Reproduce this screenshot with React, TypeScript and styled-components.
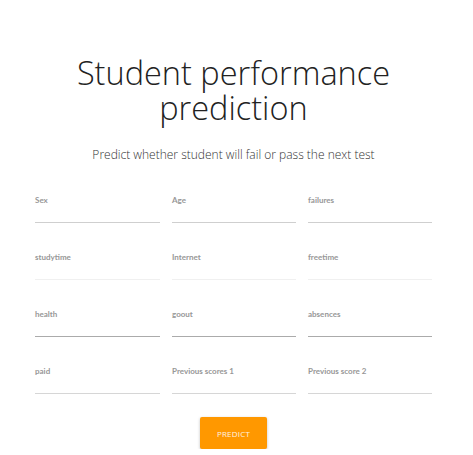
import React from "react";
import styled, { createGlobalStyle } from "styled-components";

const Global = createGlobalStyle`
  html, body { margin: 0; padding: 0; background: #fff; }
  body { font-family: "Open Sans", "Noto Sans", sans-serif; }
`;

const Page = styled.div`
  box-sizing: border-box;
  width: 473px;
  padding: 55px 6px 0 0;
  display: flex;
  flex-direction: column;
  align-items: center;
`;

const Title = styled.h1`
  margin: 0;
  font-family: "Open Sans", sans-serif;
  font-weight: 300;
  font-size: 32.5px;
  line-height: 35px;
  color: #222;
  text-align: center;
  width: 340px;
`;

const Subtitle = styled.p`
  margin: 22px 0 0;
  font-family: "Open Sans", sans-serif;
  font-weight: 300;
  font-size: 12px;
  line-height: 16px;
  color: #333;
  text-align: center;
`;

const Form = styled.div`
  margin-top: 32px;
  width: 397px;
  display: grid;
  grid-template-columns: 125px 124px 124px;
  column-gap: 12px;
  row-gap: 29px;
`;

const Field = styled.div<{ $line: string }>`
  height: 28px;
  box-sizing: border-box;
  border-bottom: 1px solid ${(p) => p.$line};
  display: flex;
  align-items: flex-start;
`;

const Label = styled.span`
  font-family: "Lato", sans-serif;
  font-weight: 700;
  font-size: 8px;
  line-height: 10px;
  color: #979797;
`;

const Button = styled.button`
  margin-top: 23px;
  width: 67px;
  height: 32px;
  border: none;
  border-radius: 2px;
  background: #ff9800;
  color: #fff3e0;
  font-family: "Open Sans", sans-serif;
  font-size: 8px;
  letter-spacing: 0.2px;
  box-shadow: 0 1px 3px rgba(0, 0, 0, 0.25);
  cursor: pointer;
`;

const rows: { labels: string[]; line: string }[] = [
  { labels: ["Sex", "Age", "failures"], line: "#cfcfcf" },
  { labels: ["studytime", "Internet", "freetime"], line: "#f0f0f0" },
  { labels: ["health", "goout", "absences"], line: "#ababab" },
  { labels: ["paid", "Previous scores 1", "Previous score 2"], line: "#d6d6d6" },
];

export default function App() {
  return (
    <>
      <Global />
      <Page>
        <Title>Student performance prediction</Title>
        <Subtitle>Predict whether student will fail or pass the next test</Subtitle>
        <Form>
          {rows.flatMap((r) =>
            r.labels.map((l) => (
              <Field key={l} $line={r.line}>
                <Label>{l}</Label>
              </Field>
            ))
          )}
        </Form>
        <Button>PREDICT</Button>
      </Page>
    </>
  );
}
